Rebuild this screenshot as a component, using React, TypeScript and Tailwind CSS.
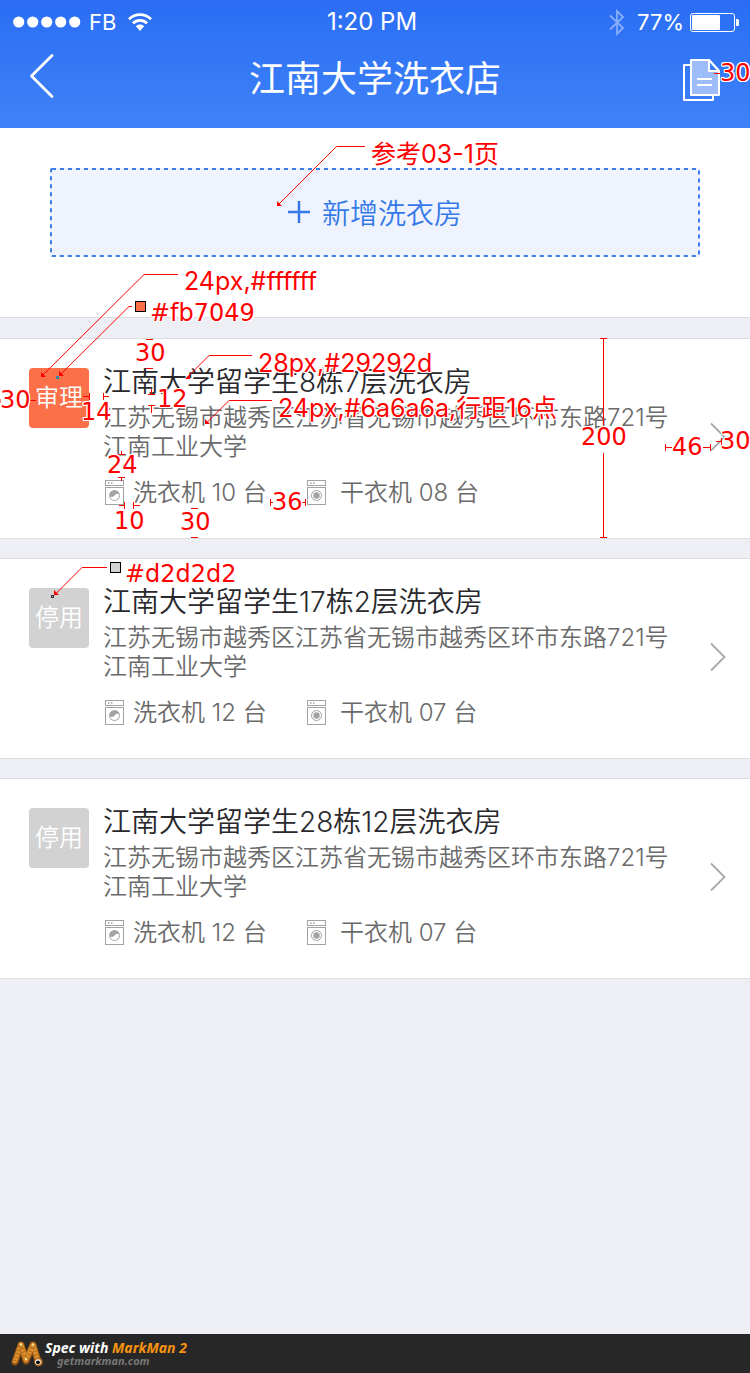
const UI_FONT = 'font-["Noto_Sans_CJK_SC",sans-serif]';

type Laundry = {
  status: string;
  active: boolean;
  name: string;
  address: string[];
  washers: string;
  dryers: string;
};

const laundries: Laundry[] = [
  {
    status: '审理',
    active: true,
    name: '江南大学留学生8栋7层洗衣房',
    address: ['江苏无锡市越秀区江苏省无锡市越秀区环市东路721号', '江南工业大学'],
    washers: '洗衣机 10 台',
    dryers: '干衣机 08 台',
  },
  {
    status: '停用',
    active: false,
    name: '江南大学留学生17栋2层洗衣房',
    address: ['江苏无锡市越秀区江苏省无锡市越秀区环市东路721号', '江南工业大学'],
    washers: '洗衣机 12 台',
    dryers: '干衣机 07 台',
  },
  {
    status: '停用',
    active: false,
    name: '江南大学留学生28栋12层洗衣房',
    address: ['江苏无锡市越秀区江苏省无锡市越秀区环市东路721号', '江南工业大学'],
    washers: '洗衣机 12 台',
    dryers: '干衣机 07 台',
  },
];

function StatusBar() {
  return (
    <div className="grid h-11 grid-cols-3 items-center pr-[11px] pl-[13px] font-[Inter,sans-serif] text-[22px] leading-6 text-white">
      <div className="flex items-center">
        <svg width="68" height="12" viewBox="0 0 68 12" fill="#fff" aria-hidden="true">
          <circle cx="5.7" cy="6" r="5.6" />
          <circle cx="19.7" cy="6" r="5.6" />
          <circle cx="33.7" cy="6" r="5.6" />
          <circle cx="47.7" cy="6" r="5.6" />
          <circle cx="61.7" cy="6" r="5.6" />
        </svg>
        <span className="ml-2">FB</span>
        <svg className="ml-3" width="24" height="19" viewBox="0 0 24 19" aria-hidden="true">
          <g fill="none" stroke="#fff" strokeWidth="2.7">
            <path d="M1 6.2C7.2 .2 16.800 .2 23 6.200" />
            <path d="M4.900 10.200C9 6.300 15 6.300 19.100 10.200" />
          </g>
          <path d="M7.800 13.200C10.300 11 13.700 11 16.200 13.200L12 18Z" fill="#fff" />
        </svg>
      </div>
      <span className="pr-2 text-center text-2xl leading-6">1:20 PM</span>
      <div className="flex items-center justify-end">
        <svg width="16" height="27" viewBox="0 0 16 27" fill="none" stroke="#86aefa" strokeWidth="1.800" aria-hidden="true">
          <path d="M1 6.500L14 19L8 25V2L14 8L1 20.500" />
        </svg>
        <span className="ml-3">77%</span>
        <svg className="ml-1.5" width="49" height="19" viewBox="0 0 49 19" aria-hidden="true">
          <rect x=".5" y=".5" width="44" height="18" rx="2.500" fill="none" stroke="#fff" />
          <rect x="2" y="2" width="28" height="15" rx="1" fill="#fff" />
          <path d="M46 6h1.500q1.500 0 1.500 1.500v4q0 1.500-1.500 1.500H46z" fill="#fff" />
        </svg>
      </div>
    </div>
  );
}

function Header() {
  return (
    <header className="h-32 bg-linear-to-b from-[#2a6df4] to-[#3f82f8]">
      <StatusBar />
      <div className="flex h-16 items-center justify-between pr-[29px] pl-[29px] text-white">
        <button type="button" aria-label="返回" className="w-[38px]">
          <svg width="26" height="46" viewBox="0 0 26 46" fill="none" stroke="#fff" strokeWidth="2.800" strokeLinecap="round" strokeLinejoin="round">
            <path d="M23 2.500L2.500 23L23 43.500" />
          </svg>
        </button>
        <h1 className="text-4xl leading-10">江南大学洗衣店</h1>
        <button type="button" aria-label="记录" className="mt-2">
          <svg width="38" height="42" viewBox="0 0 38 42" stroke="#fff" strokeWidth="2" strokeLinejoin="round">
            <path d="M7 6H1V41H30V37" fill="none" />
            <path d="M8 1H26L36 12V36H8Z" fill="#9dbdfa" />
            <path d="M26 1V12H36Z" fill="#3a7df7" />
            <path d="M14 20H29M14 26H29" fill="none" />
          </svg>
        </button>
      </div>
    </header>
  );
}

function AddButton() {
  return (
    <section className="border-b border-[#dcdde1] bg-white px-[50px] pt-10 pb-[60px]">
      <button
        type="button"
        className="relative flex h-[89px] w-full items-center justify-center bg-[#eff3fe] pb-0.5 text-[28px] leading-8 font-[350] text-[#3579e8]"
      >
        <svg className="absolute inset-0 h-full w-full" aria-hidden="true">
          <rect
            className="h-[calc(100%-2px)] w-[calc(100%-2px)]"
            x="1"
            y="1"
            rx="1"
            fill="none"
            stroke="#3a7eea"
            strokeWidth="2"
            strokeDasharray="4 4"
          />
        </svg>
        <svg width="22" height="22" viewBox="0 0 22 22" stroke="#3579e8" strokeWidth="2.500" aria-hidden="true">
          <path d="M11 0V22M0 11H22" />
        </svg>
        <span className="ml-3">新增洗衣房</span>
      </button>
    </section>
  );
}

function MachineIcon({ dryer }: { dryer?: boolean }) {
  return (
    <svg width="20" height="25" viewBox="0 0 20 25" fill="none" stroke="#a2a2a2" aria-hidden="true">
      <rect x=".5" y=".5" width="18" height="5" />
      <rect x=".5" y="7.500" width="18" height="17" />
      <path d="M3 3h1.500M6 3h1.500" strokeWidth="1.500" />
      <circle cx="9.500" cy="15.500" r="5" />
      {dryer ? (
        <circle cx="9.500" cy="15.500" r="3.200" fill="#a2a2a2" stroke="none" />
      ) : (
        <path d="M5 16.500C7.500 17.500 9 16.500 10 15S12.500 13.200 14.300 14.500A5 5 0 0 0 5 13.500Z" fill="#a2a2a2" stroke="none" />
      )}
    </svg>
  );
}

function LaundryCard({ item }: { item: Laundry }) {
  const badge = item.active ? 'bg-[#fb7049]' : 'bg-[#d2d2d2]';
  return (
    <li className="border-y border-[#dcdde1] bg-white font-[Inter,'Noto_Sans_CJK_SC',sans-serif] font-[350]">
      <a href="#" className="flex pt-[29px] pr-6 pb-[33px] pl-[29px]">
        <span className={`flex size-[60px] shrink-0 items-center justify-center rounded text-2xl leading-6 text-white ${badge}`}>
          {item.status}
        </span>
        <div className="ml-3.5 min-w-0 flex-1 text-[#6a6a6a]">
          <h2 className="text-[28px] leading-7 text-[#29292d]">{item.name}</h2>
          <p className="mt-[7px] text-2xl leading-[29px]">
            {item.address.map((line) => (
              <span key={line} className="block">{line}</span>
            ))}
          </p>
          <div className="mt-[19px] flex gap-9 pl-0.5 text-2xl leading-[25px]">
            <span className="flex w-[166px] items-center gap-2 whitespace-nowrap">
              <MachineIcon />
              {item.washers}
            </span>
            <span className="flex items-center gap-[13px] whitespace-nowrap">
              <MachineIcon dryer />
              {item.dryers}
            </span>
          </div>
        </div>
        <svg className="shrink-0 self-center" width="16" height="30" viewBox="0 0 16 30" fill="none" stroke="#a8a8a8" strokeWidth="1.800" aria-hidden="true">
          <path d="M1 1.500L14.500 15L1 28.500" />
        </svg>
      </a>
    </li>
  );
}

/* Spec annotations: measured distances, colours and font notes laid over the screen. */
const measures = [
  { text: '30', at: 'left-[720px] top-[61px]' },
  { text: '30', at: 'left-[135px] top-[341px]' },
  { text: '30', at: 'left-0 top-[388px]' },
  { text: '12', at: 'left-[157px] top-[387px]' },
  { text: '14', at: 'left-[81px] top-[400px]' },
  { text: '24', at: 'left-[107px] top-[453px]' },
  { text: '10', at: 'left-[114px] top-[509px]' },
  { text: '30', at: 'left-[180px] top-[510px]' },
  { text: '36', at: 'left-[272px] top-[490px]' },
  { text: '200', at: 'left-[581px] top-[425px]' },
  { text: '46', at: 'left-[672px] top-[435px]' },
  { text: '30', at: 'left-[720px] top-[429px]' },
  { text: '#fb7049', at: 'left-[150px] top-[301px]' },
  { text: '#d2d2d2', at: 'left-[125px] top-[562px]' },
];

const notes = [
  { text: '参考03-1页', at: 'left-[371px] top-[142px]' },
  { text: '24px,#ffffff', at: 'left-[184px] top-[269px]' },
  { text: '28px,#29292d', at: 'left-[258px] top-[351px]' },
  { text: '24px,#6a6a6a,行距16点', at: 'left-[278px] top-[396px]' },
];

function Annotations() {
  return (
    <div className="pointer-events-none absolute inset-0 overflow-hidden text-2xl leading-6 whitespace-nowrap text-[#f00] [text-shadow:1px_0_#fff,-1px_0_#fff,0_1px_#fff,0_-1px_#fff,1px_1px_#fff,-1px_-1px_#fff,1px_-1px_#fff,-1px_1px_#fff]">
      <svg className="absolute top-0 left-0" width="750" height="620" viewBox="0 0 750 620" fill="none" stroke="#f00" aria-hidden="true">
        <path d="M365 146.500H336.500L278 205M178 274.500H144L42 376M132 306.500H129L59 376M252 355.500H209L187 377.500M272 400.500H229L206 423.500M107 567.500H82L54 595.500" />
        <path
          d="M277 206V201L282 206ZM41 377V372L46 377ZM59 376V371L64 376ZM190 379L185 379L190 374ZM205 424V419L210 424ZM54 595V590L59 595Z"
          fill="#f00"
          stroke="none"
        />
        <path d="M714 73.500H720M146 339.500H153M146 368.500H153M30 400.500H36M0 399V403" />
        <path d="M83 396.500H89M89.500 393V400M103.500 393V400M103 396.500H109" />
        <path d="M148 394.500H155M151.500 389V394M148 405.500H155M151.500 406V413" />
        <path d="M118 454.500H125M121.500 451V454M118 477.500H125M121.500 478V481" />
        <path d="M119 505.500H125M124.500 502V509M133.500 502V509M133 505.500H140M191 508.500H198M191 537.500H198" />
        <path d="M270.500 499V506M270 502.500H273M305.500 499V506M302 502.500H305" />
        <path d="M600 338.500H607M603.500 338V425M603.500 453V538M600 537.500H607" />
        <path d="M665.500 444V451M665 447.500H672M710.500 444V451M703 447.500H710M721.500 438V445M716 441.500H721" />
        <rect x="135.500" y="301.500" width="10" height="10" fill="#fb7049" stroke="#000" />
        <rect x="110.500" y="562.500" width="10" height="10" fill="#d2d2d2" stroke="#000" />
        <rect x="56.500" y="376.500" width="2" height="2" stroke="#048fb6" />
        <rect x="51.500" y="595.500" width="2" height="2" stroke="#2d2d2d" />
      </svg>
      {measures.map((m) => (
        <span key={m.at} className={`absolute font-["DejaVu_Sans",sans-serif] ${m.at}`}>{m.text}</span>
      ))}
      {notes.map((n) => (
        <span key={n.at} className={`absolute font-[Inter,"Noto_Sans_CJK_SC",sans-serif] text-[25px] leading-6 ${n.at}`}>{n.text}</span>
      ))}
    </div>
  );
}

function Footer() {
  return (
    <footer className="flex h-[39px] items-center gap-0.5 bg-[#272727] pl-[11px] font-['Noto_Sans',sans-serif] font-bold italic">
      <svg width="32" height="30" viewBox="0 0 32 30" fill="none" strokeLinecap="round" strokeLinejoin="round" aria-hidden="true">
        <path d="M4 23L10 6L15 22L22 6L27 22" stroke="#8f5010" strokeWidth="7" />
        <path d="M4 22L10 5.500L15 21L22 5.500L27 22" stroke="#d98d2c" strokeWidth="5" />
        <path d="M4 22L10 5.500L15 21L22 5.500L27 22" stroke="#a8651b" strokeWidth="5" strokeLinecap="butt" strokeDasharray=".8 2.800" />
        <circle cx="10" cy="5.500" r="1.300" fill="#ffe08a" />
        <circle cx="22" cy="5.500" r="1.300" fill="#ffe08a" />
        <circle cx="15" cy="20" r="1.300" fill="#ffe08a" />
        <circle cx="27.500" cy="23" r="4.300" fill="#b86d1c" />
        <circle cx="27" cy="23" r="2.800" fill="#fff" />
        <circle cx="27" cy="23.300" r="1.900" fill="#000" />
      </svg>
      <div>
        <p className="text-sm leading-[14px] text-white">
          Spec with <span className="text-[#f7930f]">MarkMan 2</span>
        </p>
        <p className="pl-3 text-[11px] leading-3 text-[#777]">getmarkman.com</p>
      </div>
    </footer>
  );
}

export default function App() {
  return (
    <div className={`relative flex min-h-screen flex-col bg-[#eeeff5] ${UI_FONT}`}>
      <Header />
      <main className="flex-1">
        <AddButton />
        <ul className="mt-5 flex flex-col gap-[19px]">
          {laundries.map((item) => (
            <LaundryCard key={item.name} item={item} />
          ))}
        </ul>
      </main>
      <Footer />
      <Annotations />
    </div>
  );
}
